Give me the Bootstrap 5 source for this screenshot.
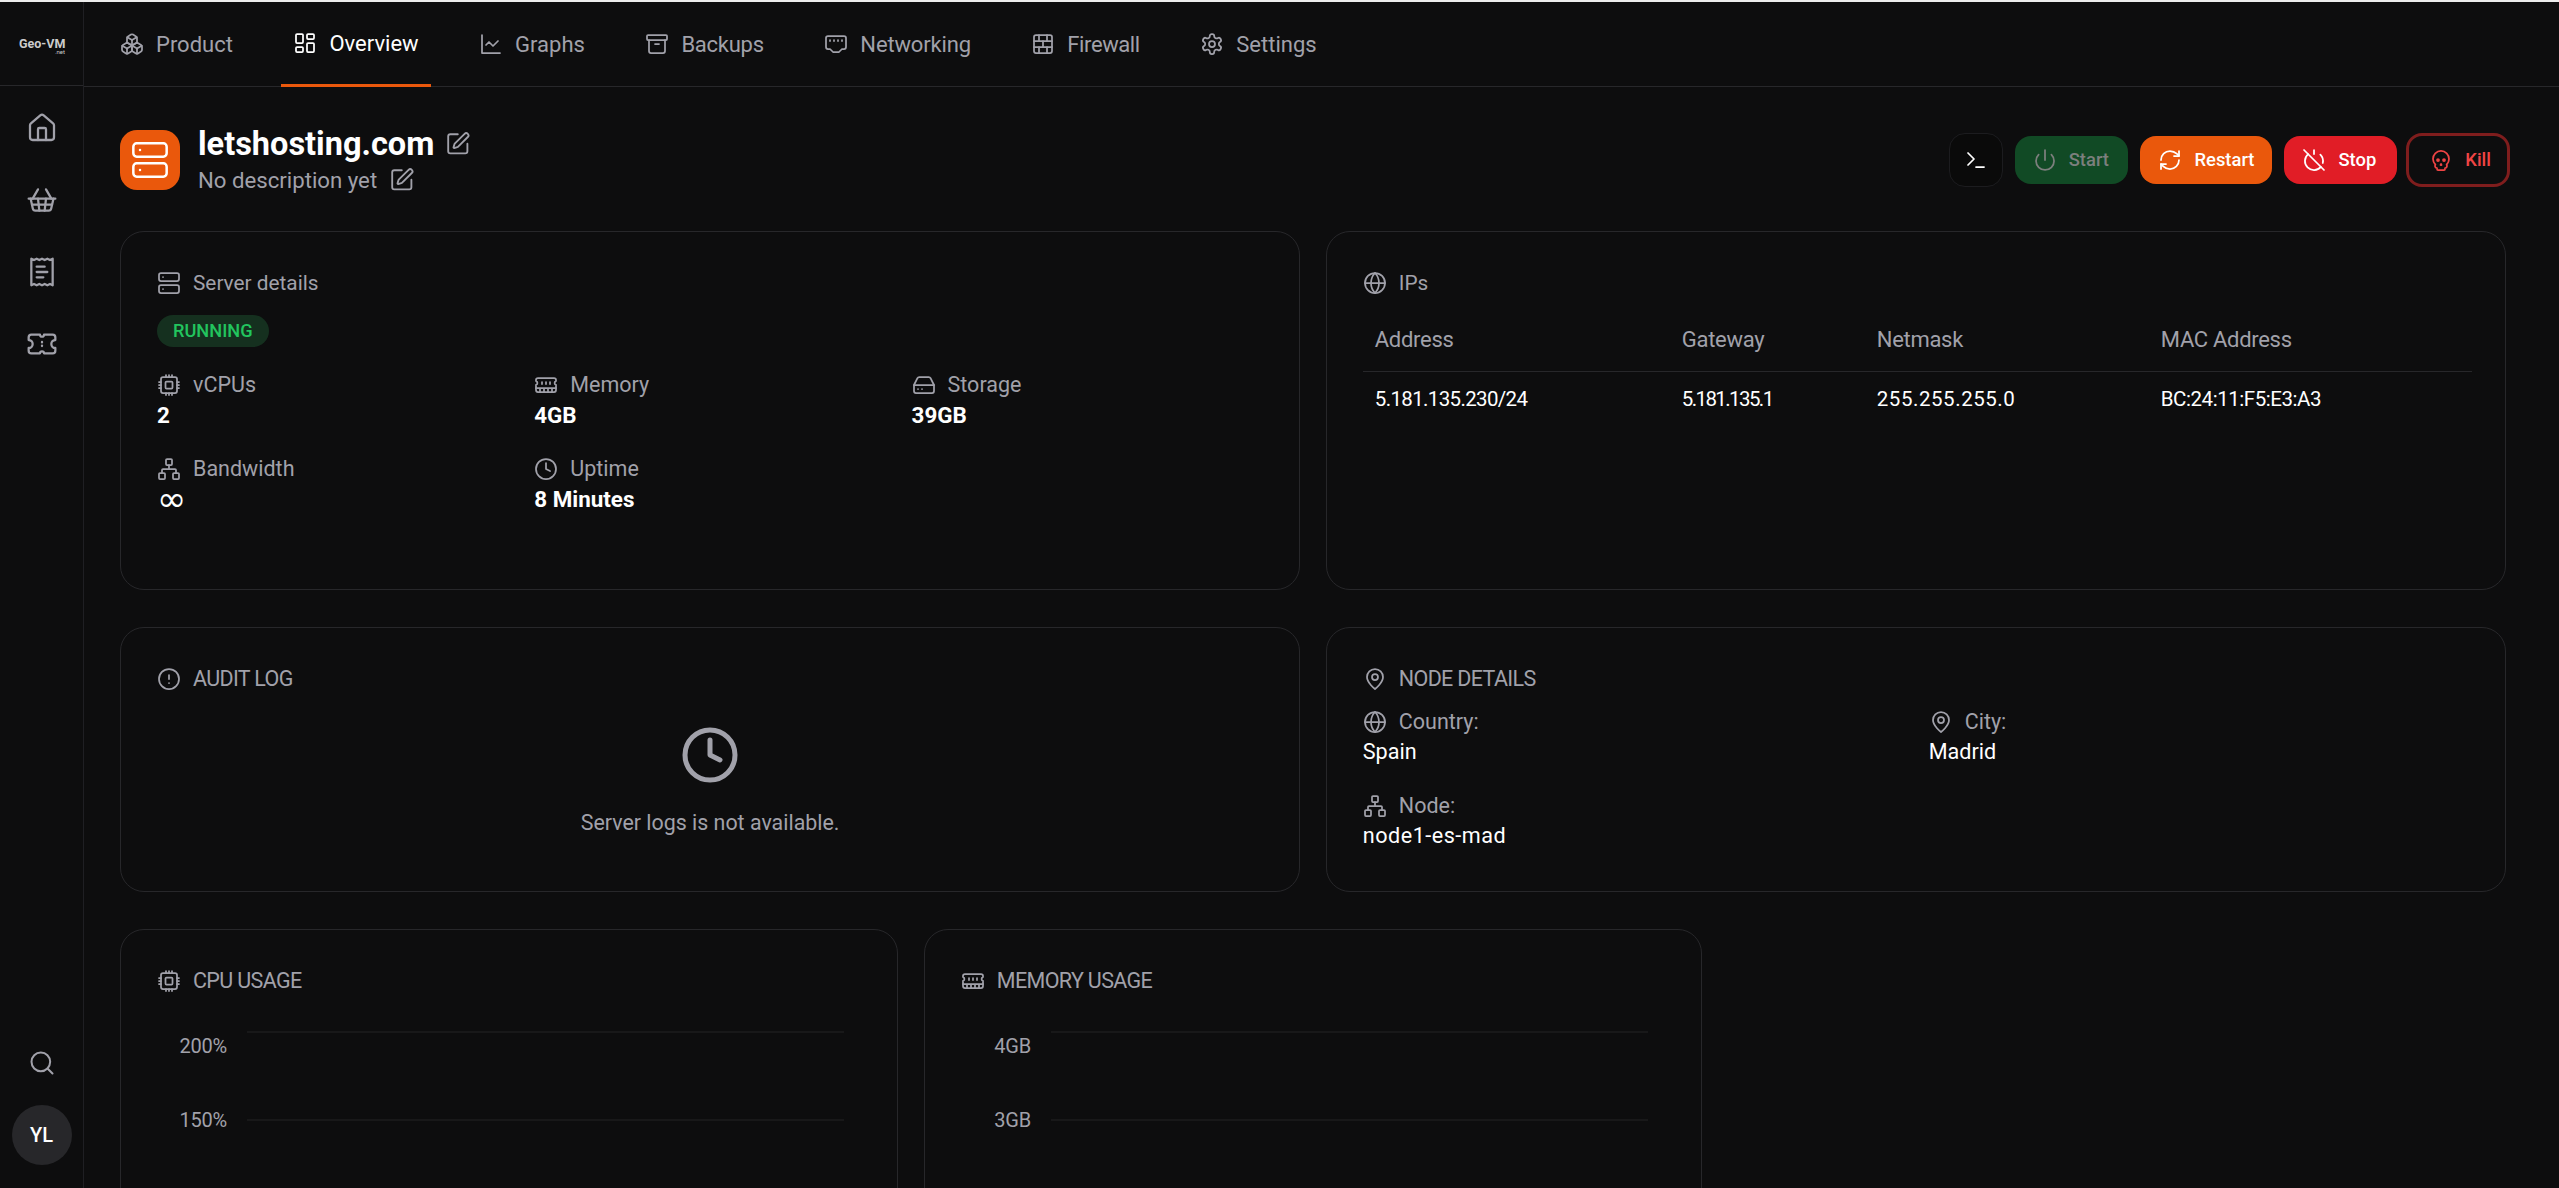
<!doctype html>
<html lang="en" data-bs-theme="dark">
<head>
<meta charset="utf-8">
<title>letshosting.com</title>
<link href="https://cdn.jsdelivr.net/npm/bootstrap@5.3.0/dist/css/bootstrap.min.css" rel="stylesheet">
<style>
html,body{height:100%;overflow:hidden}
body{background:#0d0d0e;font-family:Roboto,"Noto Sans",sans-serif;color:#fff;font-size:20px}
.topline{height:2px;background:#ececec;flex:none}
.ico{fill:none;stroke:currentColor;stroke-width:1.75;stroke-linecap:round;stroke-linejoin:round;flex:none;width:24px;height:24px}
.side{width:84px;flex:none;border-right:1px solid #1f1f23;color:#a1a1aa}
.brand{height:84px;border-bottom:1px solid #27272a;font-weight:700;font-size:12.5px;color:#ccc;line-height:11px;padding-top:36px}
.brand-net{font-size:6px;line-height:6px;font-weight:400;text-align:right;padding-right:18px}
.brand-name{padding-left:19px}
.side-item{height:72px}
.side-item .ico{width:32px;height:32px;stroke-width:1.7}
.side-item:first-child{margin-top:6px}
.side-search{width:28px;height:28px;margin-bottom:28px}
.avatar{width:60px;height:60px;background:#27272a;color:#fff;font-size:20px;font-weight:500;margin-bottom:23px}
.tabs{height:85px;border-bottom:1px solid #27272a;padding-left:24px;gap:36.5px;flex-wrap:nowrap}
.tabs .nav-link{height:85px;padding:2px 12px 0;gap:12px;color:#a1a1aa;font-size:22px;border-bottom:3px solid transparent;margin-bottom:-1px}
.tabs .nav-link.active{color:#fff;border-bottom-color:#ea580c;padding-top:0}
.tabs .nav-link.trim-a{letter-spacing:-.25px}
.tabs .nav-link.trim-b{letter-spacing:-.16px}
.tabs .nav-link.trim-c{letter-spacing:-.4px}
.content{padding:43px 53px 0 36px}
.pagehead{height:60px;margin-bottom:41px}
.server-tile{width:60px;height:60px;background:#ea580c;border-radius:17px;color:#fff;margin-right:18px}
.server-tile .ico{width:40px;height:40px;stroke-width:1.5}
.srv-name{font-size:32.5px;line-height:36px;font-weight:700;gap:11px;margin-top:1px}
.srv-desc{font-size:22.2px;line-height:32px;color:#a1a1aa;gap:12px;margin-top:2px}
.srv-name .ico,.srv-desc .ico{color:#a1a1aa;width:25.6px;height:25.6px}
.actions{gap:12px;margin-right:-4px}
.act{height:48px;padding:0 18px;gap:12px;border-radius:16px;border:0;font-size:18.4px;font-weight:500;color:#fff;--bs-btn-hover-color:#fff}
.act-term{width:54px;height:54px;padding:0;justify-content:center;background:#0a0a0a;border:1.5px solid #1c1c1f}
.act-start{background:#114a25;color:#7c7f7d;padding-right:19.5px}
.act-restart{background:#ea580c}
.act-stop{background:#e11d26;padding-right:20.5px}
.act-kill{height:54px;padding:0 16px 0 20px;background:transparent;border:3px solid #7f1d1d;color:#ef4444;margin-left:-2.5px}
.cards{--bs-gutter-x:25.6px;--bs-gutter-y:0;margin-bottom:37px}
.panel{--bs-card-bg:transparent;--bs-card-border-color:#27272a;--bs-card-border-radius:24px;--bs-card-border-width:1.5px;--bs-card-color:#fff}
.panel-h1{min-height:359px}
.panel-h2{min-height:265px}
.panel-b{padding:39px 36px 38px}
.panel-t{height:24px;gap:12px;color:#a1a1aa;font-size:20.8px;line-height:24px}
.panel-t.caps{letter-spacing:-.65px;font-size:21.5px}
.state{--bs-badge-padding-x:16px;--bs-badge-padding-y:0;--bs-badge-font-size:18.2px;--bs-badge-font-weight:500;background:#15301f;color:#22c55e;height:32px;line-height:32px;margin:20px 0 26px;display:inline-block}
.specs{--bs-gutter-x:25.6px;--bs-gutter-y:0}
.spec{margin-bottom:26px}
.spec-l{height:24px;gap:12px;color:#a1a1aa;font-size:21.5px}
.spec-v{font-size:22.4px;line-height:32px;font-weight:700;margin-top:2px}
.spec-inf{font-family:"DejaVu Sans",sans-serif;font-size:35px;font-weight:400;line-height:32px;height:32px}
.spec-m{font-weight:400;font-size:21.6px;margin-bottom:-2px}
.spec-wide{letter-spacing:.5px}
.nodegrid{margin-top:19px}
.nodegrid .spec{margin-bottom:28px}
.nodegrid .row:last-child .spec{margin-bottom:0}
.iptable{--bs-table-bg:transparent;--bs-table-color:#fff;--bs-table-border-color:#27272a;margin:16px 0 0;table-layout:fixed;width:calc(100% + 3px)}
.iptable th{font-weight:400;color:#a1a1aa;line-height:30px;padding:14px 12px 16px;font-size:22px;letter-spacing:-.3px}
.iptable td{border-bottom:0;line-height:30px;padding:12px 12px;font-size:20.5px;letter-spacing:-.45px}
.iptable td.ls-ad{letter-spacing:-.65px}
.iptable td.ls-gw{letter-spacing:-1.6px}
.iptable td.ls-nm{letter-spacing:.55px}
.w-a{width:307px}.w-b{width:195px}.w-c{width:284px}
.empty-clock{width:60px;height:60px;stroke-width:2;color:#a1a1aa;margin-top:34px}
.empty-txt{color:#a1a1aa;font-size:21.4px;line-height:30px;margin-top:23px}
.chart{display:block;margin-top:27px;width:100%;height:400px}
.chart text{font-family:Roboto,sans-serif;font-size:20px;fill:#a1a1aa;text-anchor:end;letter-spacing:-.2px}
.chart line{stroke:#1c1c1e;stroke-width:1.5}
</style>
</head>
<body class="d-flex flex-column">
<svg class="d-none" xmlns="http://www.w3.org/2000/svg">
<symbol id="i-boxes" viewBox="0 0 24 24"><path d="M2.97 12.92A2 2 0 0 0 2 14.63v3.24a2 2 0 0 0 .97 1.71l3 1.8a2 2 0 0 0 2.06 0L12 19v-5.5l-5-3-4.03 2.42Z"/><path d="m7 16.5-4.74-2.85"/><path d="m7 16.5 5-3"/><path d="M7 16.5v5.17"/><path d="M12 13.5V19l3.97 2.38a2 2 0 0 0 2.06 0l3-1.8a2 2 0 0 0 .97-1.71v-3.24a2 2 0 0 0-.97-1.71L17 10.5l-5 3Z"/><path d="m17 16.5-5-3"/><path d="m17 16.5 4.74-2.85"/><path d="M17 16.5v5.17"/><path d="M7.97 4.42A2 2 0 0 0 7 6.13v4.37l5 3 5-3V6.13a2 2 0 0 0-.97-1.71l-3-1.8a2 2 0 0 0-2.06 0l-3 1.8Z"/><path d="M12 8 7.26 5.15"/><path d="m12 8 4.74-2.85"/><path d="M12 13.5V8"/></symbol>
<symbol id="i-dash" viewBox="0 0 24 24"><rect x="3" y="3" width="7" height="9" rx="1"/><rect x="14" y="3" width="7" height="5" rx="1"/><rect x="14" y="12" width="7" height="9" rx="1"/><rect x="3" y="16" width="7" height="5" rx="1"/></symbol>
<symbol id="i-chart" viewBox="0 0 24 24"><path d="M3 3v18h18"/><path d="m19 9-5 5-4-4-3 3"/></symbol>
<symbol id="i-archive" viewBox="0 0 24 24"><rect x="2" y="3" width="20" height="5" rx="1"/><path d="M4 8v11a2 2 0 0 0 2 2h12a2 2 0 0 0 2-2V8"/><path d="M10 12h4"/></symbol>
<symbol id="i-eth" viewBox="0 0 24 24"><path d="m15 20 3-3h2a2 2 0 0 0 2-2V6a2 2 0 0 0-2-2H4a2 2 0 0 0-2 2v9a2 2 0 0 0 2 2h2l3 3z"/><path d="M6 8v1"/><path d="M10 8v1"/><path d="M14 8v1"/><path d="M18 8v1"/></symbol>
<symbol id="i-wall" viewBox="0 0 24 24"><rect x="3" y="3" width="18" height="18" rx="2"/><path d="M12 9v6"/><path d="M16 15v6"/><path d="M16 3v6"/><path d="M3 15h18"/><path d="M3 9h18"/><path d="M8 15v6"/><path d="M8 3v6"/></symbol>
<symbol id="i-gear" viewBox="0 0 24 24"><path d="M12.22 2h-.44a2 2 0 0 0-2 2v.18a2 2 0 0 1-1 1.73l-.43.25a2 2 0 0 1-2 0l-.15-.08a2 2 0 0 0-2.73.73l-.22.38a2 2 0 0 0 .73 2.73l.15.1a2 2 0 0 1 1 1.72v.51a2 2 0 0 1-1 1.74l-.15.09a2 2 0 0 0-.73 2.73l.22.38a2 2 0 0 0 2.73.73l.15-.08a2 2 0 0 1 2 0l.43.25a2 2 0 0 1 1 1.73V20a2 2 0 0 0 2 2h.44a2 2 0 0 0 2-2v-.18a2 2 0 0 1 1-1.73l.43-.25a2 2 0 0 1 2 0l.15.08a2 2 0 0 0 2.73-.73l.22-.39a2 2 0 0 0-.73-2.73l-.15-.08a2 2 0 0 1-1-1.74v-.5a2 2 0 0 1 1-1.74l.15-.09a2 2 0 0 0 .73-2.73l-.22-.38a2 2 0 0 0-2.73-.73l-.15.08a2 2 0 0 1-2 0l-.43-.25a2 2 0 0 1-1-1.73V4a2 2 0 0 0-2-2z"/><circle cx="12" cy="12" r="3"/></symbol>
<symbol id="i-pen" viewBox="0 0 24 24"><path d="M12 3H5a2 2 0 0 0-2 2v14a2 2 0 0 0 2 2h14a2 2 0 0 0 2-2v-7"/><path d="M18.375 2.625a1 1 0 0 1 3 3l-9.013 9.014a2 2 0 0 1-.853.505l-2.873.84a.5.5 0 0 1-.62-.62l.84-2.873a2 2 0 0 1 .506-.852z"/></symbol>
<symbol id="i-server" viewBox="0 0 24 24"><rect x="2" y="2" width="20" height="8" rx="2"/><rect x="2" y="14" width="20" height="8" rx="2"/><path d="M6 6h.01"/><path d="M6 18h.01"/></symbol>
<symbol id="i-home" viewBox="0 0 24 24"><path d="M15 21v-8a1 1 0 0 0-1-1h-4a1 1 0 0 0-1 1v8"/><path d="M3 10a2 2 0 0 1 .709-1.528l7-5.999a2 2 0 0 1 2.582 0l7 5.999A2 2 0 0 1 21 10v9a2 2 0 0 1-2 2H5a2 2 0 0 1-2-2z"/></symbol>
<symbol id="i-basket" viewBox="0 0 24 24"><path d="m15 11-1 9"/><path d="m19 11-4-7"/><path d="M2 11h20"/><path d="m3.5 11 1.6 7.4a2 2 0 0 0 2 1.6h9.8a2 2 0 0 0 2-1.6l1.7-7.4"/><path d="M4.5 15.5h15"/><path d="m5 11 4-7"/><path d="m9 11 1 9"/></symbol>
<symbol id="i-receipt" viewBox="0 0 24 24"><path d="M4 2v20l2-1 2 1 2-1 2 1 2-1 2 1 2-1 2 1V2l-2 1-2-1-2 1-2-1-2 1-2-1-2 1Z"/><path d="M14 8H8"/><path d="M16 12H8"/><path d="M13 16H8"/></symbol>
<symbol id="i-ticket" viewBox="0 0 24 24"><path d="M2 9a3 3 0 0 1 0 6v2a2 2 0 0 0 2 2h6.5a1.5 1.5 0 0 1 3 0H20a2 2 0 0 0 2-2v-2a3 3 0 0 1 0-6V7a2 2 0 0 0-2-2h-6.5a1.5 1.5 0 0 1-3 0H4a2 2 0 0 0-2 2Z"/><path d="M12 10.5v.3"/><path d="M12 13.2v.3"/></symbol>
<symbol id="i-search" viewBox="0 0 24 24"><circle cx="11" cy="11" r="8"/><path d="m21 21-4.3-4.3"/></symbol>
<symbol id="i-term" viewBox="0 0 24 24"><path d="m4 17 6-6-6-6"/><path d="M12 19h8"/></symbol>
<symbol id="i-power" viewBox="0 0 24 24"><path d="M12 2v10"/><path d="M18.4 6.6a9 9 0 1 1-12.77.04"/></symbol>
<symbol id="i-refresh" viewBox="0 0 24 24"><path d="M3 12a9 9 0 0 1 9-9 9.75 9.75 0 0 1 6.74 2.74L21 8"/><path d="M21 3v5h-5"/><path d="M21 12a9 9 0 0 1-9 9 9.75 9.75 0 0 1-6.74-2.74L3 16"/><path d="M8 16H3v5"/></symbol>
<symbol id="i-off" viewBox="0 0 24 24"><path d="M18.36 6.64A9 9 0 0 1 20.77 15"/><path d="M6.16 6.16a9 9 0 1 0 12.68 12.68"/><path d="M12 2v4"/><path d="m2 2 20 20"/></symbol>
<symbol id="i-skull" viewBox="0 0 24 24"><path d="m12.5 17-.5-1-.5 1h1z"/><path d="M15 22a1 1 0 0 0 1-1v-1a2 2 0 0 0 1.56-3.25 8 8 0 1 0-11.12 0A2 2 0 0 0 8 20v1a1 1 0 0 0 1 1z"/><circle cx="15" cy="12" r="1"/><circle cx="9" cy="12" r="1"/></symbol>
<symbol id="i-cpu" viewBox="0 0 24 24"><rect x="4" y="4" width="16" height="16" rx="2"/><rect x="8.5" y="8.5" width="7" height="7" rx="1"/><path d="M15 2v2M12 2v2M9 2v2M15 20v2M12 20v2M9 20v2M2 15h2M2 12h2M2 9h2M20 15h2M20 12h2M20 9h2"/></symbol>
<symbol id="i-mem" viewBox="0 0 24 24"><path d="M6 19v-3"/><path d="M10 19v-3"/><path d="M14 19v-3"/><path d="M18 19v-3"/><path d="M8 11V9"/><path d="M16 11V9"/><path d="M12 11V9"/><path d="M2 15h20"/><path d="M2 7a2 2 0 0 1 2-2h16a2 2 0 0 1 2 2v1.1a2 2 0 0 0 0 3.837V17a2 2 0 0 1-2 2H4a2 2 0 0 1-2-2v-5.1a2 2 0 0 0 0-3.837Z"/></symbol>
<symbol id="i-drive" viewBox="0 0 24 24"><path d="M22 12H2"/><path d="M5.45 5.11 2 12v6a2 2 0 0 0 2 2h16a2 2 0 0 0 2-2v-6l-3.45-6.89A2 2 0 0 0 16.76 4H7.24a2 2 0 0 0-1.79 1.11z"/><path d="M6 16h.01"/><path d="M10 16h.01"/></symbol>
<symbol id="i-net" viewBox="0 0 24 24"><rect x="16" y="16" width="6" height="6" rx="1"/><rect x="2" y="16" width="6" height="6" rx="1"/><rect x="9" y="2" width="6" height="6" rx="1"/><path d="M5 16v-3a1 1 0 0 1 1-1h12a1 1 0 0 1 1 1v3"/><path d="M12 12V8"/></symbol>
<symbol id="i-clock" viewBox="0 0 24 24"><circle cx="12" cy="12" r="10"/><path d="M12 6v6l4 2"/></symbol>
<symbol id="i-globe" viewBox="0 0 24 24"><circle cx="12" cy="12" r="10"/><path d="M12 2a14.5 14.5 0 0 0 0 20 14.5 14.5 0 0 0 0-20"/><path d="M2 12h20"/></symbol>
<symbol id="i-alert" viewBox="0 0 24 24"><circle cx="12" cy="12" r="10"/><path d="M12 8v4"/><path d="M12 16h.01"/></symbol>
<symbol id="i-pin" viewBox="0 0 24 24"><path d="M20 10c0 6-8 12-8 12s-8-6-8-12a8 8 0 0 1 16 0Z"/><circle cx="12" cy="10" r="3"/></symbol>
</svg>

<div class="topline"></div>
<div class="d-flex flex-grow-1 overflow-hidden">
  <aside class="side d-flex flex-column align-items-center">
    <div class="brand w-100"><div class="brand-name">Geo-VM</div><div class="brand-net">.net</div></div>
    <nav class="d-flex flex-column w-100">
      <a class="side-item d-flex align-items-center justify-content-center text-reset" href="#"><svg class="ico"><use href="#i-home"/></svg></a>
      <a class="side-item d-flex align-items-center justify-content-center text-reset" href="#"><svg class="ico"><use href="#i-basket"/></svg></a>
      <a class="side-item d-flex align-items-center justify-content-center text-reset" href="#"><svg class="ico"><use href="#i-receipt"/></svg></a>
      <a class="side-item d-flex align-items-center justify-content-center text-reset" href="#"><svg class="ico"><use href="#i-ticket"/></svg></a>
    </nav>
    <div class="mt-auto d-flex flex-column align-items-center">
      <svg class="ico side-search"><use href="#i-search"/></svg>
      <div class="avatar rounded-circle d-flex align-items-center justify-content-center">YL</div>
    </div>
  </aside>
  <main class="flex-grow-1 overflow-hidden">
    <ul class="nav tabs">
      <li class="nav-item"><a class="nav-link d-flex align-items-center" href="#"><svg class="ico"><use href="#i-boxes"/></svg>Product</a></li>
      <li class="nav-item"><a class="nav-link active d-flex align-items-center" href="#"><svg class="ico"><use href="#i-dash"/></svg>Overview</a></li>
      <li class="nav-item"><a class="nav-link d-flex align-items-center" href="#"><svg class="ico"><use href="#i-chart"/></svg>Graphs</a></li>
      <li class="nav-item"><a class="nav-link trim-a d-flex align-items-center" href="#"><svg class="ico"><use href="#i-archive"/></svg>Backups</a></li>
      <li class="nav-item"><a class="nav-link trim-b d-flex align-items-center" href="#"><svg class="ico"><use href="#i-eth"/></svg>Networking</a></li>
      <li class="nav-item"><a class="nav-link trim-c d-flex align-items-center" href="#"><svg class="ico"><use href="#i-wall"/></svg>Firewall</a></li>
      <li class="nav-item"><a class="nav-link d-flex align-items-center" href="#"><svg class="ico"><use href="#i-gear"/></svg>Settings</a></li>
    </ul>
    <div class="content">
      <div class="pagehead d-flex align-items-center">
        <div class="server-tile d-flex align-items-center justify-content-center"><svg class="ico"><use href="#i-server"/></svg></div>
        <div>
          <div class="srv-name d-flex align-items-center">letshosting.com <svg class="ico"><use href="#i-pen"/></svg></div>
          <div class="srv-desc d-flex align-items-center">No description yet <svg class="ico"><use href="#i-pen"/></svg></div>
        </div>
        <div class="actions d-flex align-items-center ms-auto">
          <button class="btn act act-term d-flex align-items-center"><svg class="ico"><use href="#i-term"/></svg></button>
          <button class="btn act act-start d-flex align-items-center"><svg class="ico"><use href="#i-power"/></svg>Start</button>
          <button class="btn act act-restart d-flex align-items-center"><svg class="ico"><use href="#i-refresh"/></svg>Restart</button>
          <button class="btn act act-stop d-flex align-items-center"><svg class="ico"><use href="#i-off"/></svg>Stop</button>
          <button class="btn act act-kill d-flex align-items-center"><svg class="ico"><use href="#i-skull"/></svg>Kill</button>
        </div>
      </div>

      <div class="row cards">
        <div class="col-6">
          <div class="card panel panel-h1 h-100"><div class="panel-b">
            <div class="panel-t d-flex align-items-center"><svg class="ico"><use href="#i-server"/></svg>Server details</div>
            <div><span class="badge rounded-pill state">RUNNING</span></div>
            <div class="row specs">
              <div class="col-4 spec"><div class="spec-l d-flex align-items-center"><svg class="ico"><use href="#i-cpu"/></svg>vCPUs</div><div class="spec-v">2</div></div>
              <div class="col-4 spec"><div class="spec-l d-flex align-items-center"><svg class="ico"><use href="#i-mem"/></svg>Memory</div><div class="spec-v">4GB</div></div>
              <div class="col-4 spec"><div class="spec-l d-flex align-items-center"><svg class="ico"><use href="#i-drive"/></svg>Storage</div><div class="spec-v">39GB</div></div>
              <div class="col-4 spec"><div class="spec-l d-flex align-items-center"><svg class="ico"><use href="#i-net"/></svg>Bandwidth</div><div class="spec-v spec-inf">∞</div></div>
              <div class="col-4 spec"><div class="spec-l d-flex align-items-center"><svg class="ico"><use href="#i-clock"/></svg>Uptime</div><div class="spec-v">8 Minutes</div></div>
            </div>
          </div></div>
        </div>
        <div class="col-6">
          <div class="card panel h-100"><div class="panel-b">
            <div class="panel-t d-flex align-items-center"><svg class="ico"><use href="#i-globe"/></svg>IPs</div>
            <table class="table iptable">
              <thead><tr><th class="w-a">Address</th><th class="w-b">Gateway</th><th class="w-c">Netmask</th><th>MAC Address</th></tr></thead>
              <tbody><tr><td class="ls-ad">5.181.135.230/24</td><td class="ls-gw">5.181.135.1</td><td class="ls-nm">255.255.255.0</td><td>BC:24:11:F5:E3:A3</td></tr></tbody>
            </table>
          </div></div>
        </div>
      </div>

      <div class="row cards">
        <div class="col-6">
          <div class="card panel panel-h2 h-100"><div class="panel-b">
            <div class="panel-t caps d-flex align-items-center"><svg class="ico"><use href="#i-alert"/></svg>AUDIT LOG</div>
            <div class="d-flex flex-column align-items-center">
              <svg class="ico empty-clock"><use href="#i-clock"/></svg>
              <div class="empty-txt">Server logs is not available.</div>
            </div>
          </div></div>
        </div>
        <div class="col-6">
          <div class="card panel panel-h2 h-100"><div class="panel-b">
            <div class="panel-t caps d-flex align-items-center"><svg class="ico"><use href="#i-pin"/></svg>NODE DETAILS</div>
            <div class="nodegrid">
              <div class="row specs">
                <div class="col-6 spec"><div class="spec-l d-flex align-items-center"><svg class="ico"><use href="#i-globe"/></svg>Country:</div><div class="spec-v spec-m">Spain</div></div>
                <div class="col-6 spec"><div class="spec-l d-flex align-items-center"><svg class="ico"><use href="#i-pin"/></svg>City:</div><div class="spec-v spec-m">Madrid</div></div>
              </div>
              <div class="row specs">
                <div class="col-6 spec"><div class="spec-l d-flex align-items-center"><svg class="ico"><use href="#i-net"/></svg>Node:</div><div class="spec-v spec-m spec-wide">node1-es-mad</div></div>
              </div>
            </div>
          </div></div>
        </div>
      </div>

      <div class="row cards">
        <div class="col-4">
          <div class="card panel"><div class="panel-b">
            <div class="panel-t caps d-flex align-items-center"><svg class="ico"><use href="#i-cpu"/></svg>CPU USAGE</div>
            <svg class="chart"><line x1="90" y1="12" x2="687" y2="12"/><line x1="90" y1="100" x2="687" y2="100"/><line x1="90" y1="188" x2="687" y2="188"/><text x="70" y="33">200%</text><text x="70" y="107">150%</text></svg>
          </div></div>
        </div>
        <div class="col-4">
          <div class="card panel"><div class="panel-b">
            <div class="panel-t caps d-flex align-items-center"><svg class="ico"><use href="#i-mem"/></svg>MEMORY USAGE</div>
            <svg class="chart"><line x1="90" y1="12" x2="687" y2="12"/><line x1="90" y1="100" x2="687" y2="100"/><line x1="90" y1="188" x2="687" y2="188"/><text x="70" y="33">4GB</text><text x="70" y="107">3GB</text></svg>
          </div></div>
        </div>
      </div>
    </div>
  </main>
</div>
<script src="https://cdn.jsdelivr.net/npm/bootstrap@5.3.0/dist/js/bootstrap.bundle.min.js"></script>
</body>
</html>
